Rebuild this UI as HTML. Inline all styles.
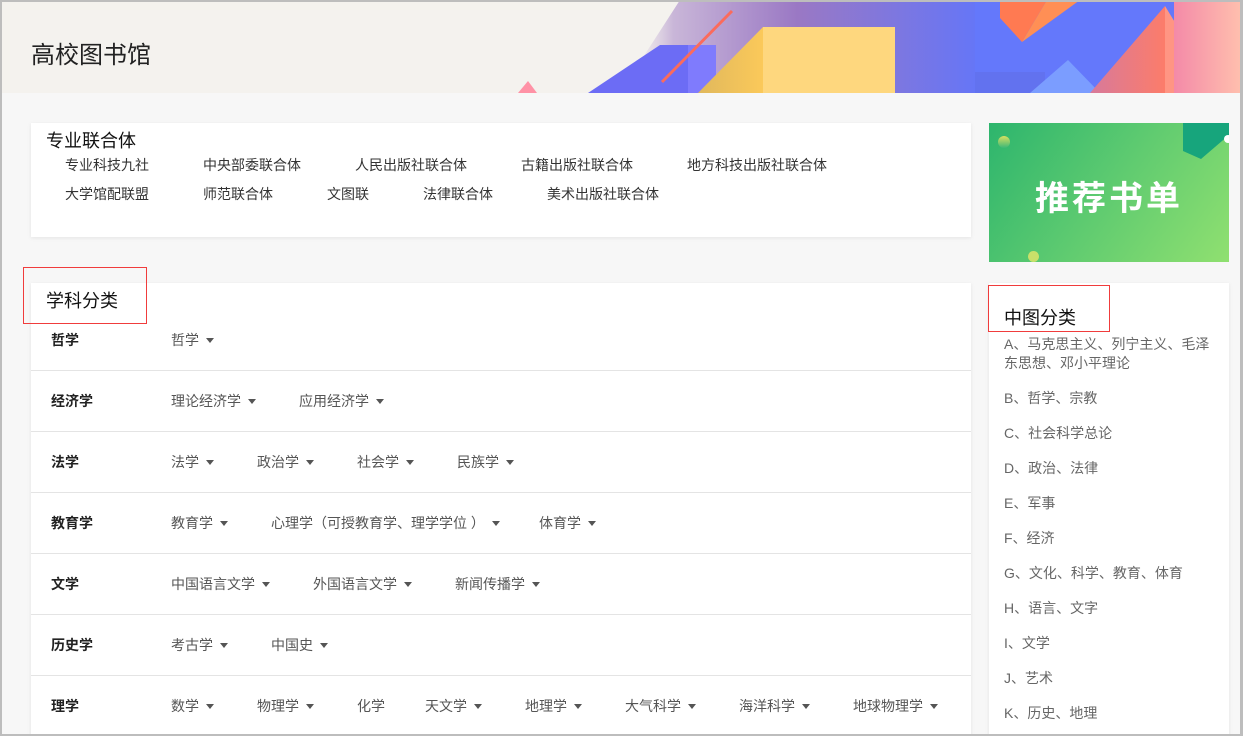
<!DOCTYPE html>
<html style="width:1243px;height:736px;overflow:hidden"><head><meta charset="utf-8"><style>
*{margin:0;padding:0;box-sizing:border-box}
body{width:1243px;height:736px;overflow:hidden;background:#f7f7f7;font-family:"Liberation Sans","Noto Sans CJK SC",sans-serif;position:relative;color:#333}
.frame{position:absolute;left:0;top:0;width:1243px;height:736px;border:2px solid #bdbdbd;border-right-width:3px;z-index:10;pointer-events:none}
.abs{position:absolute;white-space:nowrap}
.hdr{position:absolute;left:0;top:0;width:1243px;height:93px;background:#f4f2ee;overflow:hidden}
.card{position:absolute;background:#fff;box-shadow:0 1px 4px rgba(0,0,0,.08)}
.lk{font-size:14px;color:#333}
.row{position:absolute;left:31px;width:940px;height:61px;border-bottom:1px solid #e4e4e4;background:#fff}
.row b{position:absolute;left:20px;top:50%;transform:translateY(-50%);font-size:14px;color:#222}
.row .it{position:absolute;top:50%;transform:translateY(-50%);font-size:14px;color:#555;white-space:nowrap}
.ar{display:inline-block;width:0;height:0;border-left:4px solid transparent;border-right:4px solid transparent;border-top:5px solid #555;margin-left:7px;vertical-align:2px}
.zt{position:absolute;left:1004px;font-size:14px;color:#666;line-height:19px;width:214px;white-space:normal}
.red{position:absolute;border:1px solid #f03c3c;z-index:5}
</style></head><body>
<div class="hdr">
<svg width="1243" height="93" style="position:absolute;left:0;top:0">
<defs>
<linearGradient id="g1" x1="0" x2="1"><stop offset="0" stop-color="#f4f2ee" stop-opacity="0"/><stop offset=".15" stop-color="#c9b6d8"/><stop offset=".5" stop-color="#9a78c4"/><stop offset="1" stop-color="#6676f6"/></linearGradient>
<linearGradient id="g2" x1="0" x2="1"><stop offset="0" stop-color="#e0b85c"/><stop offset="1" stop-color="#fbc95a"/></linearGradient>
<linearGradient id="g3" x1="0" x2="1"><stop offset="0" stop-color="#d77a9b"/><stop offset="1" stop-color="#fc7c6a"/></linearGradient>
<linearGradient id="g4" x1="0" x2="1"><stop offset="0" stop-color="#f48aa8"/><stop offset="1" stop-color="#ffc1ae"/></linearGradient>
</defs>
<polygon points="680,0 975,0 975,93 620,93" fill="url(#g1)"/>
<rect x="975" y="0" width="200" height="93" fill="#6478fb"/>
<rect x="975" y="72" width="70" height="21" fill="#6272ef"/>
<polygon points="1000,0 1047,0 1022,42 1000,18" fill="#ff7a52"/>
<polygon points="1022,42 1047,0 1080,0 1022,42" fill="#ff8f55"/>
<polygon points="1030,93 1068,60 1100,93" fill="#7b9dff"/>
<polygon points="1090,93 1165,6 1165,93" fill="url(#g3)"/>
<polygon points="1165,6 1218,93 1165,93" fill="#ff9583"/>
<rect x="1174" y="0" width="69" height="93" fill="url(#g4)"/>
<polygon points="660,45 688,45 688,93 588,93" fill="#6c6cf5"/>
<rect x="688" y="45" width="28" height="48" fill="#7f7bfd"/>
<polygon points="763,27 698,93 763,93" fill="url(#g2)"/>
<rect x="763" y="27" width="132" height="66" fill="#fed77e"/>
<line x1="662" y1="82" x2="732" y2="11" stroke="#fb6b5c" stroke-width="3"/>
<polygon points="518,93 528,81 537,93" fill="#ff92a6"/>
</svg>
<div class="abs" style="left:31px;top:35px;font-size:24px;color:#222">高校图书馆</div>
</div>

<div class="card" style="left:31px;top:123px;width:940px;height:114px"></div>
<div class="abs" style="left:46px;top:127px;font-size:18px;color:#111">专业联合体</div>
<div class="abs lk" style="left:65px;top:155px">专业科技九社</div>
<div class="abs lk" style="left:203px;top:155px">中央部委联合体</div>
<div class="abs lk" style="left:355px;top:155px">人民出版社联合体</div>
<div class="abs lk" style="left:521px;top:155px">古籍出版社联合体</div>
<div class="abs lk" style="left:687px;top:155px">地方科技出版社联合体</div>
<div class="abs lk" style="left:65px;top:184px">大学馆配联盟</div>
<div class="abs lk" style="left:203px;top:184px">师范联合体</div>
<div class="abs lk" style="left:327px;top:184px">文图联</div>
<div class="abs lk" style="left:423px;top:184px">法律联合体</div>
<div class="abs lk" style="left:547px;top:184px">美术出版社联合体</div>

<div style="position:absolute;left:0;top:0;width:1243px;height:736px;overflow:hidden">
<div class="card" style="left:31px;top:283px;width:940px;height:460px"></div>
<div class="abs" style="left:46px;top:287px;font-size:18px;color:#111">学科分类</div>
<div class="red" style="left:23px;top:267px;width:124px;height:57px"></div>

<div class="row" style="top:310px"><b>哲学</b><span class="it" style="left:140px">哲学<i class="ar"></i></span></div>
<div class="row" style="top:371px"><b>经济学</b><span class="it" style="left:140px">理论经济学<i class="ar"></i></span><span class="it" style="left:268px">应用经济学<i class="ar"></i></span></div>
<div class="row" style="top:432px"><b>法学</b><span class="it" style="left:140px">法学<i class="ar"></i></span><span class="it" style="left:226px">政治学<i class="ar"></i></span><span class="it" style="left:326px">社会学<i class="ar"></i></span><span class="it" style="left:426px">民族学<i class="ar"></i></span></div>
<div class="row" style="top:493px"><b>教育学</b><span class="it" style="left:140px">教育学<i class="ar"></i></span><span class="it" style="left:240px">心理学（可授教育学、理学学位 ）<i class="ar"></i></span><span class="it" style="left:508px">体育学<i class="ar"></i></span></div>
<div class="row" style="top:554px"><b>文学</b><span class="it" style="left:140px">中国语言文学<i class="ar"></i></span><span class="it" style="left:282px">外国语言文学<i class="ar"></i></span><span class="it" style="left:424px">新闻传播学<i class="ar"></i></span></div>
<div class="row" style="top:615px"><b>历史学</b><span class="it" style="left:140px">考古学<i class="ar"></i></span><span class="it" style="left:240px">中国史<i class="ar"></i></span></div>
<div class="row" style="top:676px;height:80px;border:none"><b style="top:30px">理学</b>
<span class="it" style="left:140px;top:30px">数学<i class="ar"></i></span><span class="it" style="left:226px;top:30px">物理学<i class="ar"></i></span><span class="it" style="left:326px;top:30px">化学</span><span class="it" style="left:394px;top:30px">天文学<i class="ar"></i></span><span class="it" style="left:494px;top:30px">地理学<i class="ar"></i></span><span class="it" style="left:594px;top:30px">大气科学<i class="ar"></i></span><span class="it" style="left:708px;top:30px">海洋科学<i class="ar"></i></span><span class="it" style="left:822px;top:30px">地球物理学<i class="ar"></i></span>
<span class="it" style="left:140px;top:66px">地质学<i class="ar"></i></span><span class="it" style="left:226px;top:66px">生物学<i class="ar"></i></span><span class="it" style="left:340px;top:66px">系统科学<i class="ar"></i></span><span class="it" style="left:454px;top:66px">科学技术史（分学科，可授理学、工学、农学、医学学位）</span></div>

<div class="card" style="left:989px;top:283px;width:240px;height:460px"></div>
<div class="abs" style="left:1004px;top:304px;font-size:18px;color:#111">中图分类</div>
<div class="red" style="left:988px;top:285px;width:122px;height:47px"></div>
<div class="zt" style="top:335px">A、马克思主义、列宁主义、毛泽东思想、邓小平理论</div>
<div class="zt" style="top:389px">B、哲学、宗教</div>
<div class="zt" style="top:424px">C、社会科学总论</div>
<div class="zt" style="top:459px">D、政治、法律</div>
<div class="zt" style="top:494px">E、军事</div>
<div class="zt" style="top:529px">F、经济</div>
<div class="zt" style="top:564px">G、文化、科学、教育、体育</div>
<div class="zt" style="top:599px">H、语言、文字</div>
<div class="zt" style="top:634px">I、文学</div>
<div class="zt" style="top:669px">J、艺术</div>
<div class="zt" style="top:704px">K、历史、地理</div>
</div>

<div style="position:absolute;left:989px;top:123px;width:240px;height:139px;background:linear-gradient(125deg,#2db56d 0%,#5fcb70 50%,#90e070 100%);overflow:hidden">
<div style="position:absolute;left:9px;top:13px;width:12px;height:12px;border-radius:50%;background:linear-gradient(#d8e060,#3bb878)"></div>
<div style="position:absolute;left:39px;top:128px;width:11px;height:11px;border-radius:50%;background:#c9e06a"></div>
<svg width="50" height="40" style="position:absolute;left:192px;top:0"><polygon points="2,0 48,0 48,12 20,36 2,28" fill="#17a57c"/><circle cx="47" cy="16" r="4" fill="#fff"/></svg>
<div class="abs" style="left:0;width:240px;text-align:center;top:48px;font-size:34px;font-weight:bold;color:#fff;letter-spacing:3px">推荐书单</div>
</div>
<div class="frame"></div>
</body></html>
